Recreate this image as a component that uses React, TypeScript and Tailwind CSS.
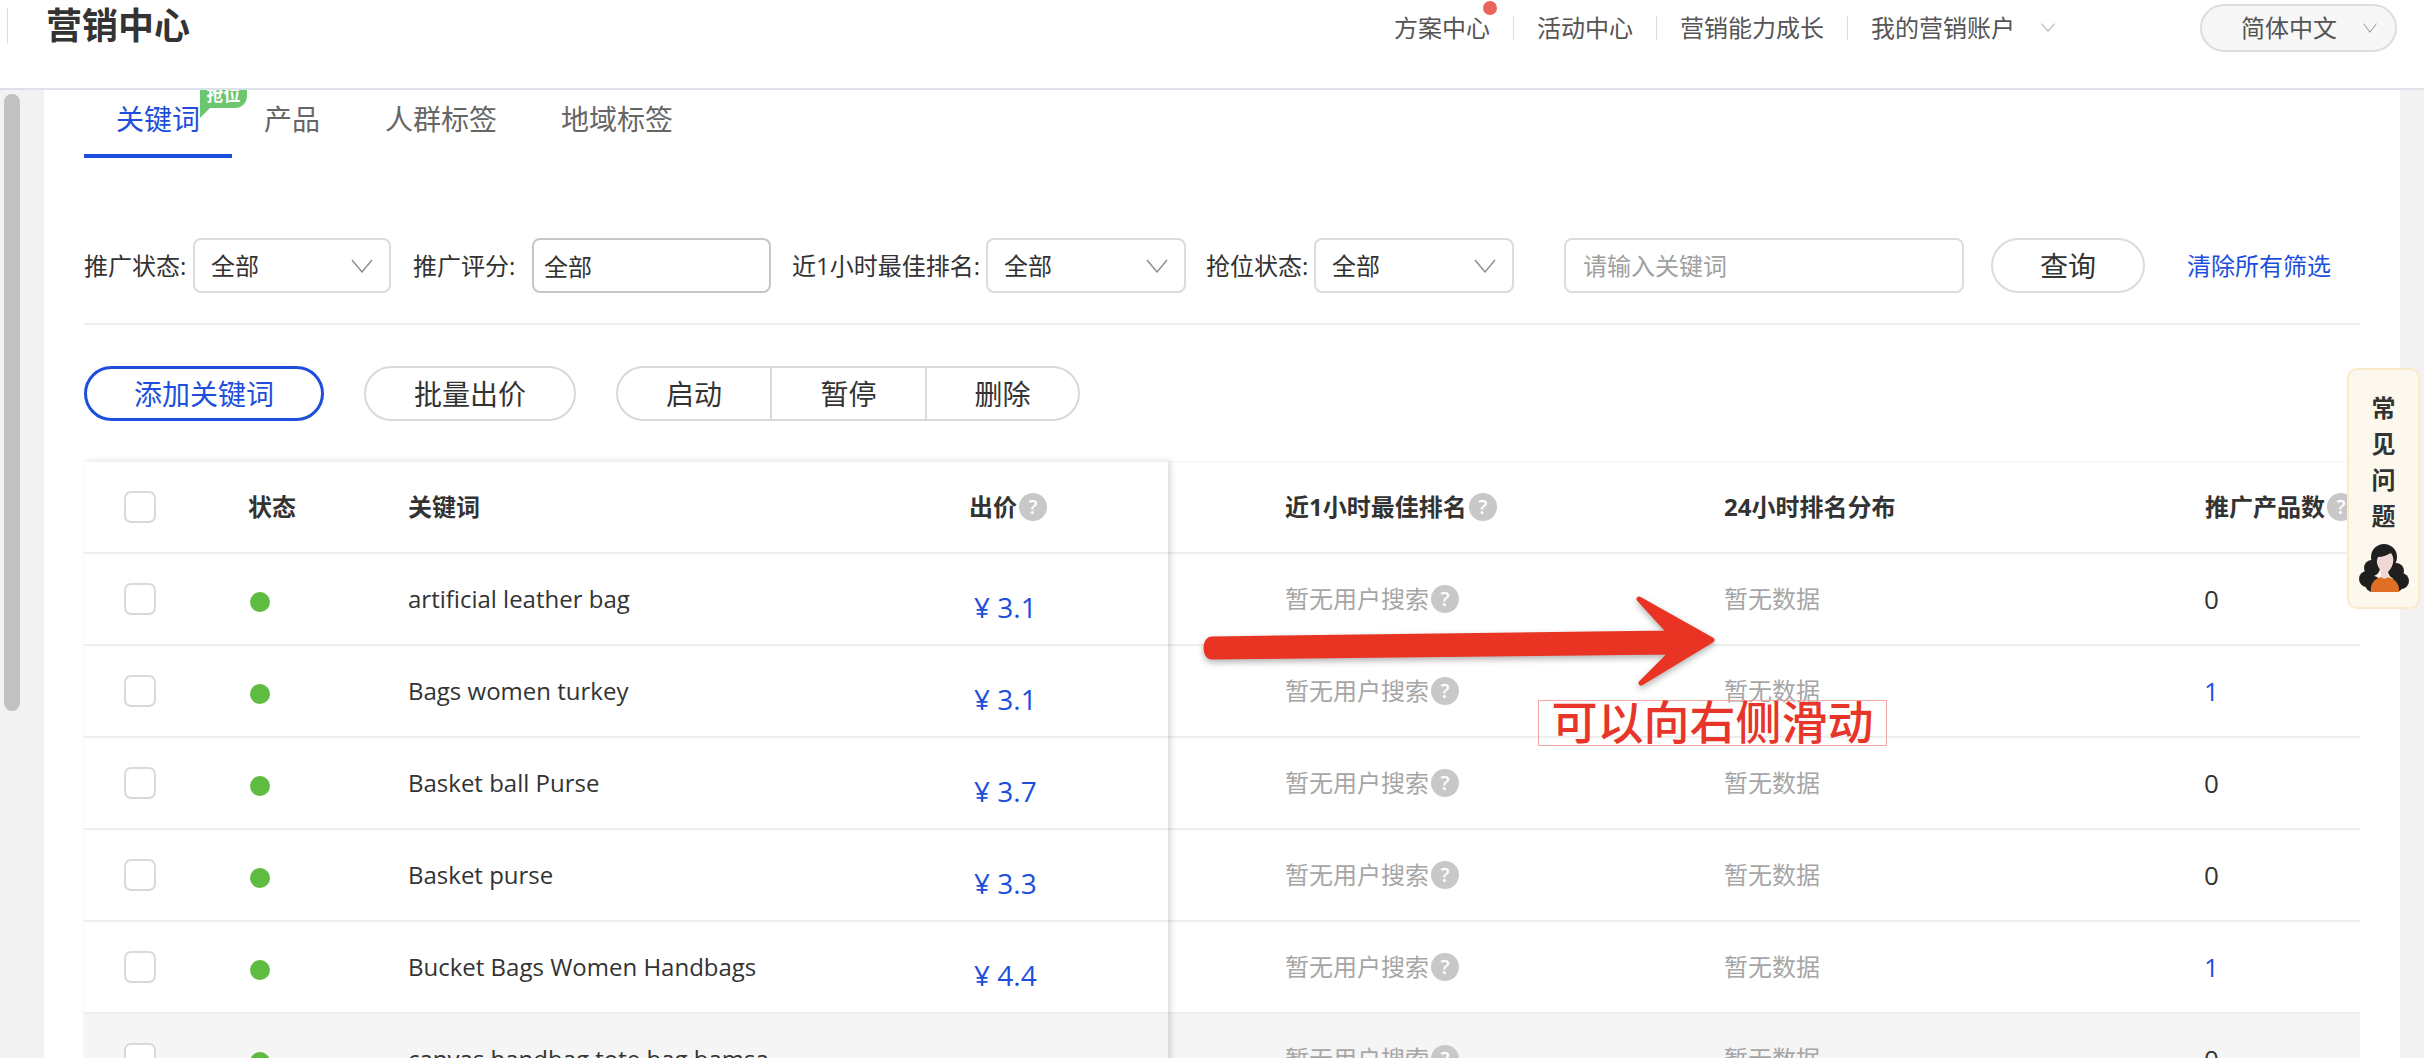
const rows = [
  { name: "artificial leather bag", price: "3.1", count: 0 },
  { name: "Bags women turkey", price: "3.1", count: 1 },
  { name: "Basket ball Purse", price: "3.7", count: 0 },
  { name: "Basket purse", price: "3.3", count: 0 },
  { name: "Bucket Bags Women Handbags", price: "4.4", count: 1 },
  { name: "canvas handbag tote bag bamsa", price: "3.6", count: 0 },
];

function Chevron({ className }: { className: string }) {
  return (
    <svg className={className} viewBox="0 0 22 14" fill="none" preserveAspectRatio="none">
      <path d="M1 1l10 12L21 1" stroke="#8c8c8c" strokeWidth="1.4" />
    </svg>
  );
}

function Help() {
  return (
    <span className="ml-[2px] flex h-[28px] w-[28px] shrink-0 items-center justify-center rounded-full bg-[#c8c8c8] text-[20px] font-semibold leading-none text-white">
      ?
    </span>
  );
}

function Select({ width, ml = "ml-[7px]" }: { width: string; ml?: string }) {
  return (
    <div className={`${width} ${ml} flex h-[55px] items-center justify-between rounded-lg border-2 border-[#dcdcdc] pl-[16px] pr-[16px] text-[24px] text-[#333]`}>
      <span>全部</span>
      <Chevron className="h-[14px] w-[22px]" />
    </div>
  );
}

function Avatar() {
  return (
    <svg className="mx-auto mt-[10px] h-[48px] w-[50px]" viewBox="0 0 50 48">
      <g fill="#1f1f1f">
        <circle cx="25" cy="13" r="13" />
        <circle cx="13" cy="24" r="8" />
        <circle cx="37" cy="27" r="8" />
        <circle cx="8" cy="35" r="8" />
        <circle cx="42" cy="37" r="8" />
        <circle cx="14" cy="40" r="8" />
        <circle cx="37" cy="41" r="7" />
      </g>
      <path d="M19 13c5 0 9-2 13-4 2 3 3 6 2 10-1 5-5 10-8 10s-7-5-8-10c-.3-2 0-4 1-6z" fill="#f1d8d6" />
      <path d="M22 27h7v8h-7z" fill="#f1d8d6" />
      <path d="M12 48c-1-8 3-13 10-15 2 2 5 2 7 0 7 2 12 7 11 15z" fill="#de6f24" />
    </svg>
  );
}

export default function App() {
  return (
    <div className="relative h-screen w-full overflow-hidden bg-[#f2f2f2] font-['Open_Sans','Noto_Sans_CJK_SC',sans-serif]">
      <header className="flex h-[90px] border-b-2 border-[#dde1ea] bg-white">
        <div className="ml-[7px] mt-[8px] h-[36px] w-px bg-[#ddd]" />
        <h1 className="ml-[38px] mt-[2px] w-[144px] whitespace-nowrap text-[36px] font-semibold leading-[48px] text-[#333]">营销中心</h1>
        <nav className="ml-[1204px] mt-[15px] flex h-[25px] items-center text-[24px] text-[#555]">
          <span className="relative">
            方案中心
            <span className="absolute -top-[9px] right-[-7px] h-[14px] w-[14px] rounded-full bg-[#e8635a]" />
          </span>
          <span className="mx-[23px] h-[24px] w-px bg-[#ddd]" />
          <span>活动中心</span>
          <span className="mx-[23px] h-[24px] w-px bg-[#ddd]" />
          <span>营销能力成长</span>
          <span className="mx-[23px] h-[24px] w-px bg-[#ddd]" />
          <span>我的营销账户</span>
          <Chevron className="ml-[26px] h-[9px] w-[14px]" />
        </nav>
        <div className="ml-[145px] mt-[4px] flex h-[48px] w-[197px] items-center rounded-full border-2 border-[#ddd] bg-[#f7f7f7] pl-[39px] text-[24px] text-[#555]">
          <span>简体中文</span>
          <Chevron className="ml-[26px] h-[10px] w-[14px]" />
        </div>
      </header>

      <div className="flex">
        <div className="w-[44px] shrink-0 pl-[4px] pt-[4px]">
          <div className="h-[617px] w-[16px] rounded-full bg-[#c1c1c1]" />
        </div>

        <main className="h-[968px] w-[2356px] bg-white pl-[40px] pr-[40px]">
          <div className="relative flex h-[68px] text-[28px] text-[#666]">
            <div className="flex w-[148px] items-center justify-center border-b-4 border-[#1d4fdc] pb-[6px] text-[#1d4fdc]">
              关键词
            </div>
            <span className="ml-[32px] mt-[8px]">产品</span>
            <span className="ml-[65px] mt-[8px]">人群标签</span>
            <span className="ml-[64px] mt-[8px]">地域标签</span>
            <div className="absolute left-[116px] top-0 h-[18px] w-[47px] overflow-hidden rounded-br-[12px] bg-[#6cc56f] text-center text-[17px] font-semibold leading-[10px] text-white">
              抢位
            </div>
            <div className="absolute left-[116px] top-[18px] h-0 w-0 border-r-[10px] border-t-[10px] border-r-transparent border-t-[#6cc56f]" />
          </div>

          <div className="mt-[80px] flex items-center whitespace-nowrap border-b-2 border-[#eee] pb-[30px] text-[24px] text-[#333]">
            <span className="w-[102px]">推广状态:</span>
            <Select width="w-[198px]" />
            <span className="ml-[22px] w-[102px]">推广评分:</span>
            <div className="ml-[17px] flex h-[55px] w-[239px] items-center rounded-lg border-2 border-[#c6c6cc] pl-[10px] pt-[2px]">
              全部
            </div>
            <span className="ml-[21px] w-[188px]">近1小时最佳排名:</span>
            <Select width="w-[200px]" ml="ml-[6px]" />
            <span className="ml-[20px] w-[104px]">抢位状态:</span>
            <Select width="w-[200px]" ml="ml-[4px]" />
            <div className="ml-[50px] flex h-[55px] w-[400px] items-center rounded-lg border-2 border-[#dcdcdc] pl-[17px] text-[#a0a0a0]">
              请输入关键词
            </div>
            <div className="ml-[27px] flex h-[55px] w-[154px] items-center justify-center rounded-full border-2 border-[#dcdcdc] text-[28px]">
              查询
            </div>
            <span className="ml-[42px] text-[#1d4fdc]">清除所有筛选</span>
          </div>

          <div className="mt-[41px] flex text-[28px] text-[#333]">
            <div className="flex h-[55px] w-[240px] items-center justify-center rounded-full border-[3px] border-[#1d4fdc] text-[#1d4fdc]">
              添加关键词
            </div>
            <div className="ml-[40px] flex h-[55px] w-[212px] items-center justify-center rounded-full border-2 border-[#d9d9d9]">
              批量出价
            </div>
            <div className="ml-[40px] flex h-[55px] w-[464px] rounded-full border-2 border-[#d9d9d9]">
              <span className="flex w-[154px] items-center justify-center border-r-2 border-[#d9d9d9]">启动</span>
              <span className="flex w-[155px] items-center justify-center border-r-2 border-[#d9d9d9]">暂停</span>
              <span className="flex flex-1 items-center justify-center">删除</span>
            </div>
          </div>

          <div className="mt-[40px] flex">
            <div className="relative z-10 w-[1084px] shrink-0 border-t border-[#f4f4f4] bg-white text-[24px] text-[#333] shadow-[3px_0_6px_rgba(0,0,0,0.14)]">
              <div className="grid h-[90px] grid-cols-[164px_160px_561px_1fr] items-center font-bold">
                <div className="pl-[40px]">
                  <div className="h-[32px] w-[32px] rounded-[7px] border-2 border-[#d9d9d9]" />
                </div>
                <span>状态</span>
                <span>关键词</span>
                <span className="flex items-center">
                  出价
                  <Help />
                </span>
              </div>
              {rows.map((row, i) => (
                <div
                  key={row.name}
                  className={`grid h-[92px] grid-cols-[164px_160px_561px_1fr] items-center border-t-2 border-[#eee] ${i === 5 ? "bg-[#f5f5f5]" : ""}`}
                >
                  <div className="pl-[40px]">
                    <div className="h-[32px] w-[32px] rounded-[7px] border-2 border-[#d9d9d9] bg-white" />
                  </div>
                  <div className="ml-[2px] mt-[6px] h-[20px] w-[20px] rounded-full bg-[#5ebc41]" />
                  <span>{row.name}</span>
                  <span className="ml-[5px] mt-[15px] text-[28px] text-[#1d4fdc]">¥ {row.price}</span>
                </div>
              ))}
            </div>

            <div className="w-[1192px] overflow-hidden border-t border-[#f4f4f4] text-[24px] text-[#a6a6a6]">
              <div className="grid h-[90px] grid-cols-[556px_481px_1fr] items-center font-bold text-[#333]">
                <span className="flex items-center whitespace-nowrap pl-[117px]">
                  近1小时最佳排名
                  <Help />
                </span>
                <span>24小时排名分布</span>
                <span className="flex items-center whitespace-nowrap">
                  推广产品数
                  <Help />
                </span>
              </div>
              {rows.map((row, i) => (
                <div
                  key={row.name}
                  className={`grid h-[92px] grid-cols-[556px_481px_1fr] items-center border-t-2 border-[#eee] ${i === 5 ? "bg-[#f5f5f5]" : ""}`}
                >
                  <span className="flex items-center pl-[117px]">
                    暂无用户搜索
                    <Help />
                  </span>
                  <span>暂无数据</span>
                  <span className={`-ml-[1px] text-[26px] ${row.count ? "text-[#1d4fdc]" : "text-[#333]"}`}>{row.count}</span>
                </div>
              ))}
            </div>
          </div>
        </main>
      </div>

      <div className="absolute left-[2347px] top-[368px] h-[241px] w-[73px] rounded-[10px] border-2 border-[#fbe9cb] bg-[#fdf8ee] pt-[20px] text-center text-[24px] font-semibold leading-[36px] text-[#333]">
        <div>常</div>
        <div>见</div>
        <div>问</div>
        <div>题</div>
        <Avatar />
      </div>

      {/* annotation drawn over the screenshot */}
      <svg className="absolute left-[1190px] top-[585px] h-[115px] w-[540px] drop-shadow-[0_3px_3px_rgba(0,0,0,0.3)]" viewBox="0 0 540 115">
        <path
          d="M22 54L480 48 449 14 522 55 451 98 482 67 22 72C14 72 14 54 22 54z"
          fill="#e93423"
          stroke="#e93423"
          strokeWidth="5"
          strokeLinejoin="round"
        />
      </svg>
      <div className="absolute left-[1538px] top-[700px] flex h-[46px] w-[349px] items-center justify-center border border-[#f2a9a3] font-['Liberation_Sans','Noto_Sans_CJK_SC',sans-serif] text-[46px] font-medium leading-none text-[#e8352a]">
        可以向右侧滑动
      </div>
    </div>
  );
}
